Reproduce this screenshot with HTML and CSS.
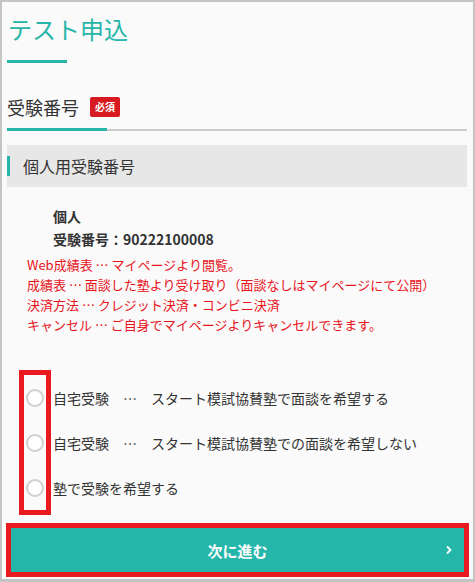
FILE: index.html
```html
<!DOCTYPE html>
<html lang="ja">
<head>
    <meta charset="UTF-8">
    <meta name="viewport" content="width=device-width, initial-scale=1.0">
    <title>テスト申込</title>
    <link rel="stylesheet" href="styles.css">
</head>
<body>

    <div class="frame">
        <!-- Page title -->
        <h1 class="page-title">テスト申込</h1>
        <div class="title-bar"></div>

        <!-- Section heading -->
        <div class="sub-head">
            <h2>受験番号</h2>
            <span class="badge">必須</span>
        </div>

        <div class="box-head">個人用受験番号</div>

        <div class="info">
            <p>個人</p>
            <p>受験番号：90222100008</p>
        </div>

        <div class="notes">
            <p>Web成績表 … マイページより閲覧。</p>
            <p>成績表 … 面談した塾より受け取り（面談なしはマイページにて公開）</p>
            <p>決済方法 … クレジット決済・コンビニ決済</p>
            <p>キャンセル … ご自身でマイページよりキャンセルできます。</p>
        </div>

        <!-- Choices -->
        <div class="choices">
            <label class="choice"><span class="radio"></span>自宅受験　…　スタート模試協賛塾で面談を希望する</label>
            <label class="choice"><span class="radio"></span>自宅受験　…　スタート模試協賛塾での面談を希望しない</label>
            <label class="choice"><span class="radio"></span>塾で受験を希望する</label>
            <div class="mark"></div>
        </div>

        <div class="next-wrap">
            <button class="next-btn">
                次に進む
                <svg class="chev" width="8" height="10" viewBox="0 0 8 10"><path d="M2 1.5 L5.5 5 L2 8.5" fill="none" stroke="#fff" stroke-width="1.8"/></svg>
            </button>
        </div>
    </div>

</body>
</html>
```

FILE: styles.css
```css
/* General Reset */
* {
    margin: 0;
    padding: 0;
    box-sizing: border-box;
}

body {
    font-family: "Noto Sans CJK JP", "Noto Sans", sans-serif;
    color: #333;
    background: #c4c4c4;
}

.frame {
    width: 475px;
    height: 582px;
    border-style: solid;
    border-color: #c4c4c4;
    border-width: 2px 2px 3px 2px;
    background: #fafafa;
    padding: 0 6px 0 5px;
}

/* Title */
.page-title {
    font-size: 24px;
    font-weight: normal;
    color: #27b5a9;
    line-height: 36px;
    margin-top: 9px;
    padding-left: 1px;
}

.title-bar {
    width: 60px;
    height: 3px;
    background: #27b5a9;
    margin-top: 13px;
}

/* Section heading */
.sub-head {
    display: flex;
    align-items: center;
    gap: 11px;
    margin-top: 31px;
    padding-bottom: 9px;
    border-bottom: 2px solid #cccccc;
    position: relative;
}

.sub-head::after {
    content: "";
    position: absolute;
    left: 0;
    bottom: -2px;
    width: 100px;
    height: 3px;
    background: #27b5a9;
}

.sub-head h2 {
    font-size: 18px;
    font-weight: normal;
    line-height: 26px;
}

.badge {
    background: #d71a21;
    color: #fff;
    font-size: 10px;
    font-weight: bold;
    line-height: 20px;
    padding: 0 5px;
    border-radius: 2px;
}

.box-head {
    margin-top: 14px;
    height: 42px;
    background: #e7e7e7;
    font-size: 16px;
    line-height: 42px;
    padding-left: 16px;
    position: relative;
}

.box-head::before {
    content: "";
    position: absolute;
    left: 0;
    top: 11px;
    width: 3px;
    height: 20px;
    background: #27b5a9;
}

/* Info */
.info {
    margin-top: 18px;
    padding-left: 46px;
    font-size: 14px;
    font-weight: bold;
    line-height: 23px;
}

.notes {
    margin-top: 4px;
    padding-left: 20px;
    font-size: 13px;
    line-height: 20px;
    color: #e8141c;
}

/* Choices */
.choices {
    margin-top: 35px;
    padding: 5px 0;
    position: relative;
}

.choice {
    display: flex;
    align-items: center;
    height: 45px;
    font-size: 14px;
}

.radio {
    width: 18px;
    height: 18px;
    border: 2px solid #cfcfcf;
    border-radius: 50%;
    margin-left: 19px;
    margin-right: 9px;
    background: #fff;
}

.mark {
    position: absolute;
    left: 12px;
    top: 0;
    bottom: 0;
    width: 32px;
    border: 5px solid #e8191f;
}

/* Next button */
.next-wrap {
    margin: 8px -2px 0 -1px;
    border: 5px solid #e8191f;
}

.next-btn {
    display: flex;
    align-items: center;
    justify-content: center;
    width: 100%;
    height: 44px;
    border: none;
    background: #25b6aa;
    color: #fff;
    font-family: inherit;
    font-size: 15px;
    font-weight: bold;
    position: relative;
}

.chev {
    position: absolute;
    right: 11px;
    top: 17px;
}
```
